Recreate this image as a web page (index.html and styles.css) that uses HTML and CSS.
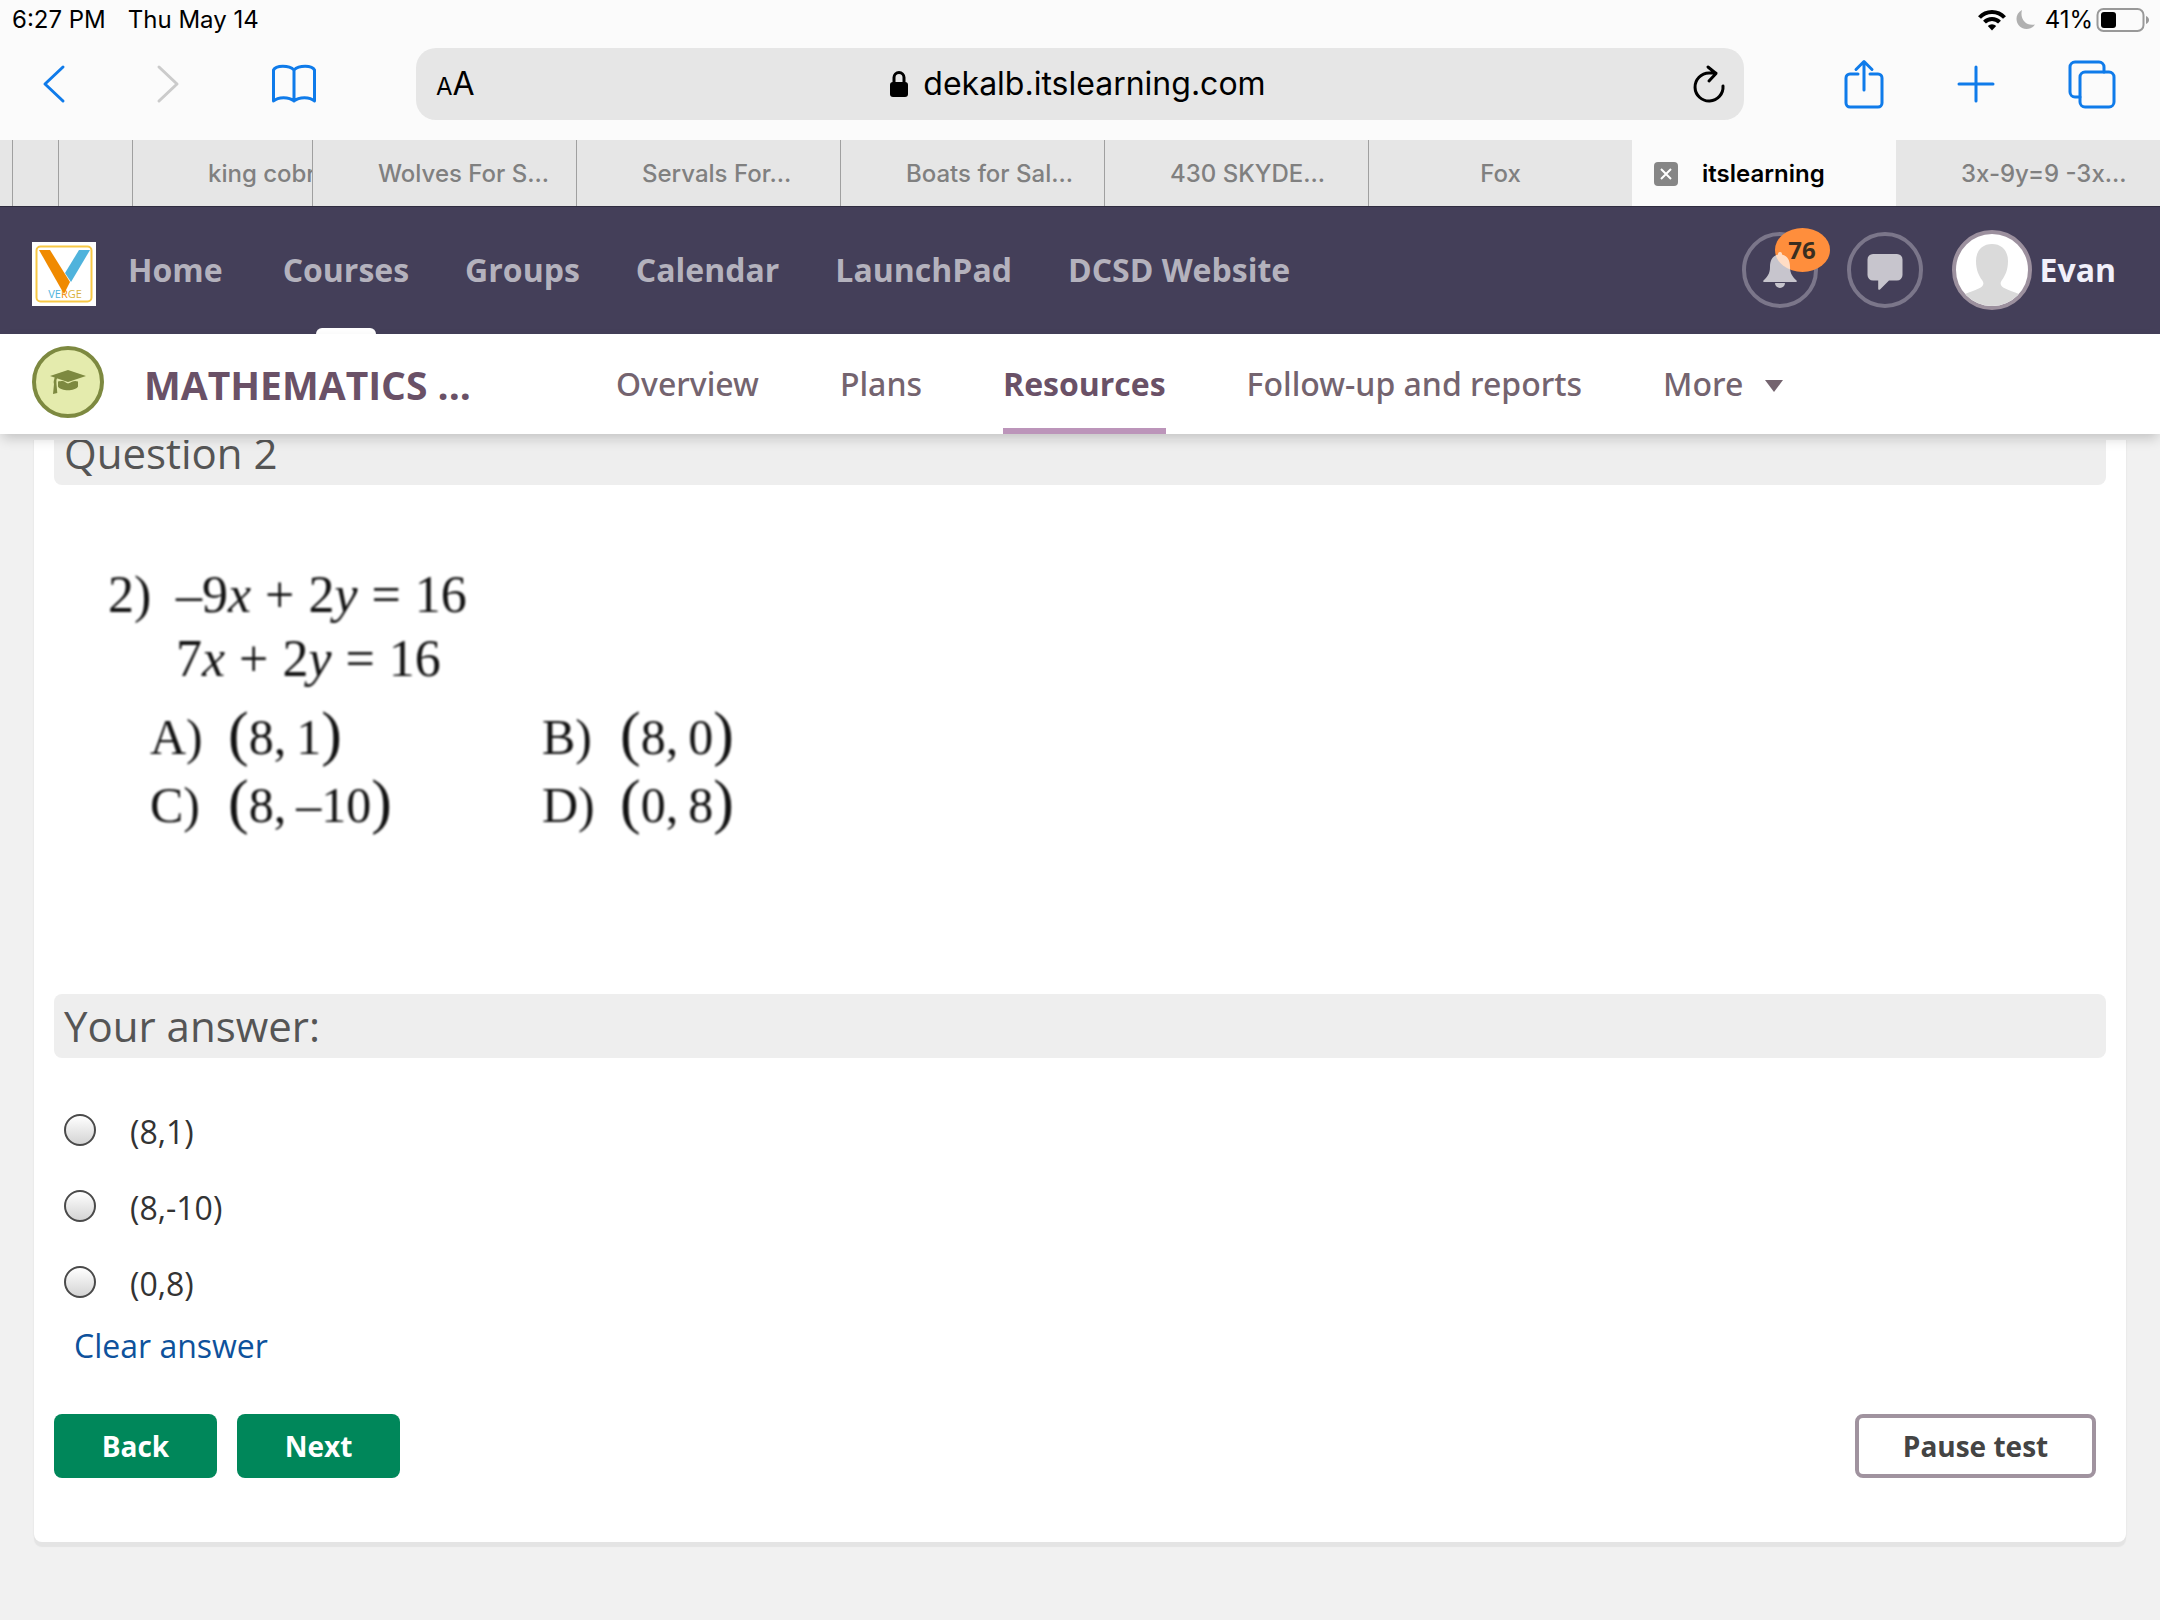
FILE: index.html
```html
<!DOCTYPE html>
<html lang="en">
<head>
<meta charset="utf-8">
<meta name="viewport" content="width=device-width, initial-scale=1">
<title>itslearning</title>
<link rel="stylesheet" href="styles.css">
</head>
<body>
<div class="browser">
  <div class="status">
    <span>6:27 PM</span>
    <span>Thu May 14</span>
    <div class="status-right">
      <svg class="wifi" width="30" height="22" viewBox="0 0 30 22" aria-hidden="true"><path d="M2.500 8.500A17 17 0 0 1 27.500 8.500" fill="none" stroke="#000" stroke-width="4"/><path d="M7.500 13.200A10.500 10.500 0 0 1 22.500 13.200" fill="none" stroke="#000" stroke-width="4"/><path d="M10.800 17a6 6 0 0 1 8.400 0L15 21.500z"/></svg>
      <svg class="moon" width="22" height="22" viewBox="0 0 22 22" aria-hidden="true"><path d="M7 1C1 4 0 11 3.500 16c4 5.500 12.500 5.500 16.500-.500C11 17.500 4.500 10 7 1z" fill="#b0b0b0"/></svg>
      <span>41%</span>
      <svg class="battery" width="54" height="26" viewBox="0 0 54 26" aria-hidden="true"><rect x="1.500" y="2" width="46" height="22" rx="6" fill="none" stroke="#999" stroke-width="2"/><rect x="5" y="5" width="15" height="16" rx="3"/><path d="M50 9c4 1.500 4 6.500 0 8z" fill="#999"/></svg>
    </div>
  </div>
  <div class="toolbar">
    <div class="tools tools-left">
      <button class="tool" aria-label="Back"><svg width="24" height="40" viewBox="0 0 24 40"><path d="M21 3L3 20l18 17" /></svg></button>
      <button class="tool tool-off" aria-label="Forward" disabled><svg width="24" height="40" viewBox="0 0 24 40"><path d="M3 3l18 17L3 37"/></svg></button>
      <button class="tool" aria-label="Bookmarks"><svg width="48" height="40" viewBox="0 0 48 40"><path d="M24 6C19 1 6 1 3.500 6v31C8 32.500 19 32.500 24 37 29 32.500 40 32.500 44.500 37V6C42 1 29 1 24 6zV37"/></svg></button>
    </div>
    <div class="address">
      <button class="aa" aria-label="Text size"><span class="aa-small">A</span>A</button>
      <label class="url"><svg width="20" height="28" viewBox="0 0 20 28" aria-hidden="true"><rect x="1" y="12" width="18" height="15" rx="3"/><path d="M5 13V7.500a5 5 0 0 1 10 0V13" fill="none" stroke="#000" stroke-width="3"/></svg><input type="text" value="dekalb.itslearning.com" aria-label="Address"></label>
      <button class="reload" aria-label="Reload"><svg width="34" height="40" viewBox="0 0 34 40"><path d="M31 22A14 14 0 1 1 17 9h7M16 3l8 6.500L17 17" /></svg></button>
    </div>
    <div class="tools tools-right">
      <button class="tool" aria-label="Share"><svg width="40" height="50" viewBox="0 0 40 50"><path d="M14 15H6a4 4 0 0 0-4 4v25a4 4 0 0 0 4 4h28a4 4 0 0 0 4-4V19a4 4 0 0 0-4-4h-8M20 31V3M12 10.500L20 2.500l8 8"/></svg></button>
      <button class="tool" aria-label="New tab"><svg width="40" height="40" viewBox="0 0 40 40"><path d="M20 3v34M3 20h34"/></svg></button>
      <button class="tool" aria-label="Show tabs"><svg width="48" height="50" viewBox="0 0 48 50"><path d="M12 38H7a5 5 0 0 1-5-5V8a5 5 0 0 1 5-5h24a5 5 0 0 1 5 5v5"/><rect x="12" y="13" width="34" height="35" rx="5"/></svg></button>
    </div>
  </div>
  <div class="tabs">
    <button class="tab" aria-label="Tab"></button>
    <button class="tab" aria-label="Tab"></button>
    <button class="tab" aria-label="Tab"></button>
    <button class="tab tab-cut">king cobra</button>
    <button class="tab tab-long">Wolves For S...</button>
    <button class="tab tab-long">Servals For...</button>
    <button class="tab tab-long">Boats for Sal...</button>
    <button class="tab tab-long">430 SKYDE...</button>
    <button class="tab">Fox</button>
    <div class="tab tab-on"><button class="close" aria-label="Close tab"><svg width="24" height="24" viewBox="0 0 24 24"><path d="M7 7l10 10M17 7L7 17"/></svg></button>itslearning</div>
    <button class="tab tab-long tab-last">3x-9y=9 -3x...</button>
  </div>
</div>

<header class="site">
  <a class="logo" href="#" aria-label="Verge"><svg width="64" height="64" viewBox="0 0 64 64"><rect width="64" height="64" fill="#fff"/><rect x="4.500" y="4.500" width="55" height="55" rx="4" fill="none" stroke="#f7c845" stroke-width="2"/><path d="M47 8h11L39 40l-6-9z" fill="#4fb3dc"/><path d="M7 8h11l20 32-6 12z" fill="#f08a00"/><text class="logo-text" x="33" y="56" text-anchor="middle"><tspan fill="#4fb3dc">VE</tspan><tspan fill="#f08a00">R</tspan><tspan fill="#d9b23c">GE</tspan></text></svg></a>
  <nav class="site-nav">
    <a href="#">Home</a>
    <a href="#" class="here">Courses</a>
    <a href="#">Groups</a>
    <a href="#">Calendar</a>
    <a href="#">LaunchPad</a>
    <a href="#">DCSD Website</a>
  </nav>
  <div class="account">
    <button class="round" aria-label="Notifications, 76 new"><span class="badge">76</span><svg class="bell" width="36" height="38" viewBox="0 0 36 38"><path d="M18 1c-2 0-2 1.500-2 2.500C10 5 8 10 8 16c0 7-3 10-6.500 13.500C1 30 1 31 2 31h32c1 0 1-1 .500-1.500C31 26 28 23 28 16c0-6-2-11-8-12.500C20 2.500 20 1 18 1zM13 32a5 5 0 0 0 10 0z" fill="#fff" fill-opacity=".7"/></svg></button>
    <button class="round" aria-label="Messages"><svg width="36" height="42" viewBox="0 -4 36 42"><path d="M6 1h24a5.500 5.500 0 0 1 5.500 5.500V22a5.500 5.500 0 0 1-5.500 5.500h-8L13 36.500c-1 .800-1.800.200-1.800-.800V27.500H6A5.500 5.500 0 0 1 .500 22V6.500A5.500 5.500 0 0 1 6 1z" fill="#c7c5cd"/></svg></button>
    <a class="user" href="#"><svg width="80" height="80" viewBox="0 0 80 80" aria-hidden="true"><defs><clipPath id="face"><circle cx="40" cy="40" r="36"/></clipPath></defs><circle cx="40" cy="40" r="38" fill="#fff" stroke="#9c909e" stroke-width="4"/><path clip-path="url(#face)" d="M40 14c10 0 16 7 16 17 0 9-3 15-6 19-5 7 4 9 17 14 5 2 5 16 5 16H8s0-14 5-16c13-5 22-7 17-14-3-4-6-10-6-19 0-10 6-17 16-17z" fill="#dadada"/></svg><span>Evan</span></a>
  </div>
</header>

<div class="course">
  <svg class="course-icon" width="72" height="72" viewBox="0 0 72 72" aria-hidden="true"><circle cx="36" cy="36" r="34" fill="#e4ebad" stroke="#7d8940" stroke-width="4"/><path d="M36 24l18 6-18 6-18-6zM26 35.500c7-1.500 6 .500 10 2 4-1.500 6-3.500 10-2v5c-3 5-17 5-20 0zM22.500 31.500l3 .5c-1.500 1-1 3-1 6l.800 9-4.300 1 1-10c-1-3 .500-4 .500-6.500z" fill="#7d8940"/></svg>
  <h1 class="course-name">MATHEMATICS ...</h1>
  <nav class="course-nav">
    <a href="#">Overview</a>
    <a href="#">Plans</a>
    <a href="#" class="open" aria-current="page">Resources</a>
    <a href="#">Follow-up and reports</a>
    <a href="#">More<svg class="caret" width="20" height="14" viewBox="0 0 20 14" aria-hidden="true"><path d="M1 1h18l-9 12z" fill="#74646f"/></svg></a>
  </nav>
</div>

<main class="page">
  <form class="card">
    <h2 class="band band-first">Question 2</h2>
    <div class="problem">
      <div class="line"><span class="number">2)</span><span>&ndash;9<i>x</i></span><span>+</span><span>2<i>y</i></span><span>=</span><span>16</span></div>
      <div class="line"><span class="number"></span><span>7<i>x</i></span><span>+</span><span>2<i>y</i></span><span>=</span><span>16</span></div>
      <div class="choices">
        <div><span class="letter">A)</span><b>(</b>8,&thinsp;1<b>)</b></div>
        <div><span class="letter">B)</span><b>(</b>8,&thinsp;0<b>)</b></div>
        <div><span class="letter">C)</span><b>(</b>8,&thinsp;&ndash;10<b>)</b></div>
        <div><span class="letter">D)</span><b>(</b>0,&thinsp;8<b>)</b></div>
      </div>
    </div>
    <h2 class="band">Your answer:</h2>
    <div class="answers">
      <label class="answer"><input type="radio" name="answer"><span>(8,1)</span></label>
      <label class="answer"><input type="radio" name="answer"><span>(8,-10)</span></label>
      <label class="answer"><input type="radio" name="answer"><span>(0,8)</span></label>
    </div>
    <a class="clear" href="#">Clear answer</a>
    <div class="actions">
      <button type="button" class="go">Back</button>
      <button type="button" class="go">Next</button>
      <button type="button" class="pause">Pause test</button>
    </div>
  </form>
</main>
</body>
</html>
```
FILE: styles.css
```css
* {
  box-sizing: border-box;
}

body {
  margin: 0;
  min-height: 100vh;
  background: #f1f1f1;
  color: #333;
  font: 32px/44px "Open Sans", sans-serif;
}

button,
input {
  font: inherit;
  color: inherit;
}

button {
  padding: 0;
  border: 0;
  background: none;
}

a {
  color: inherit;
  text-decoration: none;
}

svg {
  display: block;
  flex: none;
}

/* Browser frame */
.browser {
  background: #fbfbfb;
  color: #000;
  font-family: Inter, "Liberation Sans", sans-serif;
}

.status {
  display: flex;
  align-items: center;
  gap: 22px;
  height: 48px;
  padding: 0 10px 8px 12px;
  font-size: 24px;
  line-height: 32px;
}

.status-right {
  display: flex;
  align-items: center;
  margin-left: auto;
}

.moon {
  margin: 0 8px;
}

.battery {
  margin-left: 3px;
}

.toolbar {
  display: flex;
  align-items: center;
  padding-bottom: 20px;
}

.tools {
  display: flex;
  align-items: center;
}

.tools-left {
  gap: 90px;
  padding: 0 98px 0 42px;
}

.tools-right {
  gap: 72px;
  padding: 0 44px 0 100px;
}

.tool path,
.tool rect {
  fill: none;
  stroke: #0f7bea;
  stroke-width: 3;
  stroke-linecap: round;
  stroke-linejoin: round;
}

.tool-off path {
  stroke: #cbcbcb;
}

.address {
  display: flex;
  flex: 1;
  align-items: center;
  justify-content: space-between;
  height: 72px;
  padding: 0 18px 0 20px;
  border-radius: 20px;
  background: #e6e6e6;
}

.aa {
  padding-top: 2px;
  font-size: 32px;
}

.aa-small {
  font-size: 24px;
}

.url {
  display: flex;
  align-items: center;
  gap: 14px;
}

.url input {
  width: 354px;
  padding: 0;
  border: 0;
  background: none;
  font-size: 32px;
}

.reload path {
  fill: none;
  stroke: #000;
  stroke-width: 3;
  stroke-linecap: round;
  stroke-linejoin: round;
}

.tabs {
  display: grid;
  grid-template-columns: 12px 46px 74px 180fr repeat(7, 264fr);
  height: 66px;
}

.tab {
  min-width: 0;
  padding-top: 2px;
  overflow: hidden;
  border-left: 1px solid #a0a0a0;
  background: #e6e6e6;
  color: #808080;
  font-size: 24px;
  font-weight: 500;
  text-align: center;
  white-space: nowrap;
}

.tab:first-child,
.tab-last {
  border-left: 0;
}

.tab-long {
  padding-left: 65px;
  text-align: left;
}

.tab-cut {
  padding-left: 75px;
  text-align: left;
}

.tab-on {
  display: flex;
  align-items: center;
  gap: 24px;
  padding-left: 22px;
  border-left: 0;
  background: #fbfbfb;
  color: #000;
  font-weight: 600;
}

.close {
  border-radius: 4px;
  background: #868686;
}

.close path {
  stroke: #fff;
  stroke-width: 2;
}

/* Site header */
.site {
  display: flex;
  align-items: center;
  height: 128px;
  padding: 0 44px 0 32px;
  background: #443f59;
  box-shadow: inset 0 1px #2f2c40;
  color: #b4b2bd;
  font-weight: 700;
}

.logo {
  padding-top: 8px;
}

.logo-text {
  font: 11px "Open Sans", sans-serif;
}

.site-nav {
  display: flex;
  align-self: stretch;
  gap: 56px;
  padding-left: 32px;
}

.site-nav a {
  position: relative;
  display: flex;
  align-items: center;
}

.site-nav .here {
  margin-left: 4px;
}

.here::after {
  content: "";
  position: absolute;
  bottom: 0;
  left: 50%;
  width: 60px;
  height: 6px;
  margin-left: -30px;
  border-radius: 6px 6px 0 0;
  background: #fff;
}

.account {
  display: flex;
  align-items: center;
  gap: 29px;
  margin-left: auto;
}

.round {
  position: relative;
  display: grid;
  place-items: center;
  width: 76px;
  height: 76px;
  border: 4px solid #7b768a;
  border-radius: 50%;
}

.bell {
  position: relative;
}

.badge {
  position: absolute;
  top: -8px;
  left: 29px;
  width: 55px;
  border-radius: 50%;
  background: #ff8e3c;
  color: #3a2e20;
  font-size: 24px;
  line-height: 44px;
}

.user {
  display: flex;
  align-items: center;
  gap: 8px;
  color: #f1f0fa;
}

/* Course bar */
.course {
  position: relative;
  display: flex;
  height: 100px;
  padding: 0 32px;
  background: #fff;
  color: #74646f;
  box-shadow: 0 6px 12px -2px rgba(0, 0, 0, 0.2);
}

.course-icon {
  margin-top: 12px;
}

.course-name {
  align-self: center;
  width: 470px;
  margin: 0;
  padding: 2px 0 0 40px;
  color: #6a5167;
  font-size: 39px;
  line-height: 52px;
  white-space: nowrap;
}

.course-nav {
  display: flex;
  gap: 81px;
  padding-left: 42px;
  font-family: "Noto Sans", "Open Sans", sans-serif;
  font-weight: 500;
}

.course-nav a {
  display: flex;
  align-items: center;
  padding-top: 6px;
  border-bottom: 6px solid transparent;
  white-space: nowrap;
}

.course-nav .open {
  border-color: #bc95ba;
  color: #6a5167;
  font-family: "Open Sans", sans-serif;
  font-weight: 700;
}

.caret {
  margin: 4px 0 0 21px;
}

/* Test page */
.page {
  margin-top: 6px;
  padding: 0 34px 72px;
  overflow: hidden;
}

.card {
  padding: 0 20px 64px;
  border-radius: 0 0 8px 8px;
  background: #fff;
  box-shadow: 0 5px 1px #e4e4e4, 0 0 2px #ddd;
}

.band {
  margin: 0;
  padding: 4px 10px;
  border-radius: 8px;
  background: #eee;
  color: #555;
  font-size: 42px;
  font-weight: 400;
  line-height: 56px;
}

.band-first {
  margin-top: -19px;
}

.problem {
  padding: 78px 54px 155px;
  color: #111;
  font: 52px/64px "Liberation Serif", serif;
  filter: blur(1px);
}

.line {
  display: flex;
  gap: 14px;
}

.number {
  width: 54px;
}

.choices {
  display: grid;
  grid-template-columns: 392px 1fr;
  padding: 12px 0 0 42px;
  font-size: 50px;
  line-height: 68px;
}

.letter {
  display: inline-block;
  width: 78px;
}

.choices b {
  font-size: 62px;
  font-weight: 400;
  line-height: 0;
}

.answers {
  display: grid;
  gap: 32px;
  padding: 52px 10px 0;
}

.answer {
  display: flex;
  gap: 34px;
}

.answer input {
  appearance: none;
  width: 32px;
  height: 32px;
  margin: 4px 0 0;
  border: 2px solid #4a4a4a;
  border-radius: 50%;
  background: linear-gradient(#fff, #d4d4d4);
}

.clear {
  display: inline-block;
  margin: 18px 20px 0;
  color: #0e529c;
}

.actions {
  display: flex;
  gap: 20px;
  padding: 46px 10px 0 0;
  font-size: 28px;
  font-weight: 700;
}

.actions button {
  height: 64px;
  border-radius: 8px;
}

.go {
  width: 163px;
  background: #00875a;
  color: #fff;
}

.pause {
  width: 241px;
  margin-left: auto;
  border: 4px solid #a0939f;
  color: #444;
}
```
